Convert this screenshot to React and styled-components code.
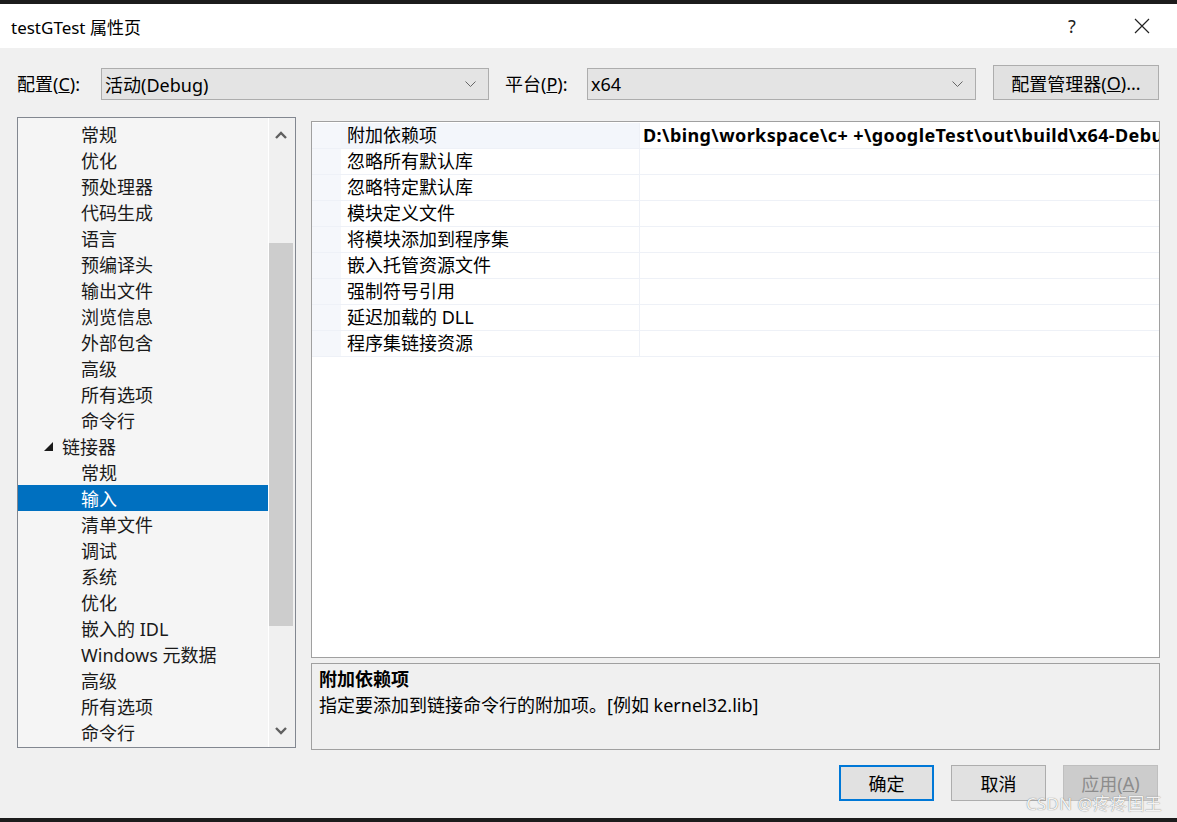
import React from 'react';
import styled, { createGlobalStyle } from 'styled-components';

const GlobalStyle = createGlobalStyle`
  html, body {
    margin: 0;
    padding: 0;
    background: #f0f0f0;
  }
  body {
    font-family: "Noto Sans", "Noto Sans CJK SC", sans-serif;
    color: #000;
  }
`;

const Window = styled.div`
  position: relative;
  width: 1177px;
  height: 822px;
  display: flex;
  flex-direction: column;
  background: #f0f0f0;
  overflow: hidden;
`;

const EdgeStrip = styled.div`
  height: 4px;
  flex-shrink: 0;
  background: #1c1c1c;
`;

const TitleBar = styled.div`
  height: 44px;
  display: flex;
  align-items: center;
  background: #fff;
  padding-left: 11px;
`;

const Title = styled.div`
  font-size: 17px;
  flex: 1;
`;

const CaptionButton = styled.div`
  width: 70px;
  height: 44px;
  display: flex;
  align-items: center;
  justify-content: center;
  font-size: 18px;
  color: #222;
`;

const Body = styled.div`
  flex: 1;
  display: flex;
  flex-direction: column;
  padding: 17px 17px 0 17px;
`;

const ConfigRow = styled.div`
  display: flex;
  align-items: flex-end;
  height: 35px;
`;

const Label = styled.div`
  width: ${({ $width }) => $width}px;
  height: 32px;
  line-height: 32px;
  font-size: 18px;
  flex-shrink: 0;
`;

const Select = styled.div`
  width: ${({ $width }) => $width}px;
  height: 32px;
  box-sizing: border-box;
  border: 1px solid #adadad;
  background: #e4e4e4;
  display: flex;
  align-items: center;
  padding: 0 12px 0 3px;
  font-size: 18px;
  margin-right: ${({ $gap }) => $gap || 0}px;
  flex-shrink: 0;
`;

const SelectText = styled.span`
  flex: 1;
`;

const Button = styled.div`
  width: ${({ $width }) => $width || 95}px;
  height: ${({ $height }) => $height || 36}px;
  box-sizing: border-box;
  display: flex;
  align-items: center;
  justify-content: center;
  font-size: 18px;
  background: ${({ $disabled }) => ($disabled ? '#cccccc' : '#e1e1e1')};
  color: ${({ $disabled }) => ($disabled ? '#8c8c8c' : '#000')};
  border: ${({ $default, $disabled }) =>
    $default ? '2px solid #0078d7' : $disabled ? '1px solid #bfbfbf' : '1px solid #adadad'};
`;

const Main = styled.div`
  margin-top: 17px;
  display: grid;
  grid-template-columns: 279px 849px;
  column-gap: 15px;
  align-items: start;
`;

const TreePanel = styled.div`
  height: 631px;
  box-sizing: border-box;
  border: 1px solid #828790;
  background: #f5f5f5;
  display: flex;
`;

const TreeList = styled.div`
  flex: 1;
  padding-top: 3px;
  overflow: hidden;
`;

const TreeRow = styled.div`
  height: 26px;
  display: flex;
  align-items: center;
  padding-left: 26px;
  font-size: 18px;
  white-space: nowrap;
  background: ${({ $selected }) => ($selected ? '#0070c0' : 'transparent')};
  color: ${({ $selected }) => ($selected ? '#fff' : '#1a1a1a')};
`;

const Expander = styled.span`
  width: 18px;
  display: flex;
  align-items: center;
  flex-shrink: 0;
`;

const TreeText = styled.span`
  margin-left: ${({ $level }) => ($level > 1 ? 19 : 0)}px;
`;

const Scrollbar = styled.div`
  width: 27px;
  box-sizing: border-box;
  border-left: 1px solid #fff;
  background: #f0f0f0;
  display: flex;
  flex-direction: column;
`;

const ScrollArrow = styled.div`
  height: ${({ $height }) => $height}px;
  display: flex;
  align-items: center;
  justify-content: center;
  padding-right: 2px;
`;

const Track = styled.div`
  flex: 1;
  padding-right: 2px;
`;

const Thumb = styled.div`
  margin-top: ${({ $top }) => $top}px;
  height: ${({ $height }) => $height}px;
  background: #cdcdcd;
`;

const RightColumn = styled.div`
  margin-top: 4px;
  display: flex;
  flex-direction: column;
  gap: 5px;
`;

const GridPanel = styled.div`
  height: 537px;
  box-sizing: border-box;
  border: 1px solid #a0a0a0;
  background: #fff;
  padding-top: 1px;
  overflow: hidden;
`;

const PropRow = styled.div`
  display: grid;
  grid-template-columns: 29px 298px 1px minmax(0, 1fr);
  height: 26px;
  box-sizing: border-box;
  border-bottom: 1px solid #eef1f7;
  font-size: 18px;
`;

const Gutter = styled.div`
  background: #f5f7fb;
`;

const PropName = styled.div`
  padding-left: 6px;
  line-height: 25px;
  white-space: nowrap;
  background: ${({ $active }) => ($active ? '#f3f6fb' : '#fff')};
`;

const ColumnRule = styled.div`
  background: #eef1f7;
`;

/* long values run past the grid edge and get clipped, like the real control */
const PropValue = styled.div`
  padding-left: 3px;
  line-height: 25px;
  font-weight: 700;
  letter-spacing: 0.4px;
  white-space: nowrap;
  overflow: hidden;
`;

const DescPanel = styled.div`
  height: 87px;
  box-sizing: border-box;
  border: 1px solid #a0a0a0;
  background: #f0f0f0;
  padding: 2px 7px;
  font-size: 18px;
  line-height: 26px;
`;

const DescTitle = styled.div`
  font-weight: 700;
`;

const Footer = styled.div`
  margin-top: 15px;
  display: flex;
  justify-content: flex-end;
  gap: 17px;
  padding-right: 2px;
`;

const Watermark = styled.div`
  position: absolute;
  right: 15px;
  bottom: 8px;
  font-size: 17px;
  line-height: 20px;
  color: rgba(252, 252, 252, 0.95);
  text-shadow: 0 0 1px rgba(70, 70, 70, 0.85);
  letter-spacing: 0.3px;
  pointer-events: none;
`;

const Chevron = ({ up }) => (
  <svg width="12" height="8" viewBox="0 0 12 8">
    <polyline
      points={up ? '1,7 6,2 11,7' : '1,1 6,6 11,1'}
      fill="none"
      stroke="#606060"
      strokeWidth="2.4"
    />
  </svg>
);

const DropChevron = () => (
  <svg width="11" height="7" viewBox="0 0 11 7">
    <polyline points="0.5,0.5 5.5,5.5 10.5,0.5" fill="none" stroke="#666" strokeWidth="1" />
  </svg>
);

const ExpandedMark = () => (
  <svg width="9" height="9" viewBox="0 0 9 9">
    <polygon points="9,0 9,9 0,9" fill="#1a1a1a" />
  </svg>
);

const CloseGlyph = () => (
  <svg width="16" height="16" viewBox="0 0 16 16">
    <path d="M1 1 L15 15 M15 1 L1 15" stroke="#222" strokeWidth="1.2" />
  </svg>
);

const treeItems = [
  { text: '常规', level: 2 },
  { text: '优化', level: 2 },
  { text: '预处理器', level: 2 },
  { text: '代码生成', level: 2 },
  { text: '语言', level: 2 },
  { text: '预编译头', level: 2 },
  { text: '输出文件', level: 2 },
  { text: '浏览信息', level: 2 },
  { text: '外部包含', level: 2 },
  { text: '高级', level: 2 },
  { text: '所有选项', level: 2 },
  { text: '命令行', level: 2 },
  { text: '链接器', level: 1, expanded: true },
  { text: '常规', level: 2 },
  { text: '输入', level: 2, selected: true },
  { text: '清单文件', level: 2 },
  { text: '调试', level: 2 },
  { text: '系统', level: 2 },
  { text: '优化', level: 2 },
  { text: '嵌入的 IDL', level: 2 },
  { text: 'Windows 元数据', level: 2 },
  { text: '高级', level: 2 },
  { text: '所有选项', level: 2 },
  { text: '命令行', level: 2 },
];

const properties = [
  { name: '附加依赖项', value: 'D:\\bing\\workspace\\c+ +\\googleTest\\out\\build\\x64-Debug' },
  { name: '忽略所有默认库', value: '' },
  { name: '忽略特定默认库', value: '' },
  { name: '模块定义文件', value: '' },
  { name: '将模块添加到程序集', value: '' },
  { name: '嵌入托管资源文件', value: '' },
  { name: '强制符号引用', value: '' },
  { name: '延迟加载的 DLL', value: '' },
  { name: '程序集链接资源', value: '' },
];

export default function App() {
  return (
    <Window>
      <GlobalStyle />
      <EdgeStrip />
      <TitleBar>
        <Title>testGTest 属性页</Title>
        <CaptionButton>?</CaptionButton>
        <CaptionButton>
          <CloseGlyph />
        </CaptionButton>
      </TitleBar>

      <Body>
        <ConfigRow>
          <Label $width={84}>
            配置(<u>C</u>):
          </Label>
          <Select $width={388} $gap={16}>
            <SelectText>活动(Debug)</SelectText>
            <DropChevron />
          </Select>
          <Label $width={82}>
            平台(<u>P</u>):
          </Label>
          <Select $width={389} $gap={17}>
            <SelectText>x64</SelectText>
            <DropChevron />
          </Select>
          <Button $width={166} $height={35}>
            配置管理器(<u>O</u>)...
          </Button>
        </ConfigRow>

        <Main>
          <TreePanel>
            <TreeList>
              {treeItems.map((item, i) => (
                <TreeRow key={i} $selected={item.selected}>
                  <Expander>{item.expanded && <ExpandedMark />}</Expander>
                  <TreeText $level={item.level}>{item.text}</TreeText>
                </TreeRow>
              ))}
            </TreeList>
            <Scrollbar>
              <ScrollArrow $height={34}>
                <Chevron up />
              </ScrollArrow>
              <Track>
                <Thumb $top={91} $height={383} />
              </Track>
              <ScrollArrow $height={32}>
                <Chevron />
              </ScrollArrow>
            </Scrollbar>
          </TreePanel>

          <RightColumn>
            <GridPanel>
              {properties.map((p, i) => (
                <PropRow key={i}>
                  <Gutter />
                  <PropName $active={i === 0}>{p.name}</PropName>
                  <ColumnRule />
                  <PropValue>{p.value}</PropValue>
                </PropRow>
              ))}
            </GridPanel>
            <DescPanel>
              <DescTitle>附加依赖项</DescTitle>
              <div>指定要添加到链接命令行的附加项。[例如 kernel32.lib]</div>
            </DescPanel>
          </RightColumn>
        </Main>

        <Footer>
          <Button $default>确定</Button>
          <Button>取消</Button>
          <Button $disabled>
            应用(<u>A</u>)
          </Button>
        </Footer>
      </Body>

      <EdgeStrip />
      <Watermark>CSDN @疼疼国王</Watermark>
    </Window>
  );
}
